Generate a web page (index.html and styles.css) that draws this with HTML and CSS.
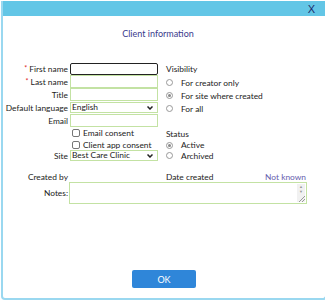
FILE: index.html
```html
<!DOCTYPE html>
<html lang="en">
<head>
    <meta charset="UTF-8">
    <title>Client information</title>
    <link rel="stylesheet" href="styles.css">
</head>
<body>
    <div class="dialog">
        <div class="titlebar">
            <span class="close">X</span>
        </div>

        <h1 class="heading">Client information</h1>

        <div class="form">
            <div class="left">
                <label class="label"><span class="req">*</span> First name</label>
                <input class="field focused" type="text">

                <label class="label"><span class="req">*</span> Last name</label>
                <input class="field" type="text">

                <label class="label">Title</label>
                <input class="field" type="text">

                <label class="label">Default language</label>
                <div class="select">English
                    <svg class="chev" width="6" height="4" viewBox="0 0 6 4"><path d="M0.5 0.5 L3 3 L5.5 0.5" fill="none" stroke="#222" stroke-width="1.5"/></svg>
                </div>

                <label class="label">Email</label>
                <input class="field" type="text">

                <span></span>
                <div class="check"><span class="box"></span>Email consent</div>

                <span></span>
                <div class="check"><span class="box"></span>Client app consent</div>

                <label class="label">Site</label>
                <div class="select small">Best Care Clinic
                    <svg class="chev" width="6" height="4" viewBox="0 0 6 4"><path d="M0.5 0.5 L3 3 L5.5 0.5" fill="none" stroke="#222" stroke-width="1.5"/></svg>
                </div>
            </div>

            <div class="right">
                <div class="group-title">Visibility</div>
                <div class="radio"><span class="dot"></span>For creator only</div>
                <div class="radio"><span class="dot on"></span>For site where created</div>
                <div class="radio"><span class="dot"></span>For all</div>

                <div class="group-title status">Status</div>
                <div class="radio tight"><span class="dot on"></span>Active</div>
                <div class="radio tight"><span class="dot"></span>Archived</div>
            </div>
        </div>

        <div class="created">
            <span class="label">Created by</span>
            <span class="date-label">Date created</span>
            <span class="unknown">Not known</span>
        </div>

        <div class="notes">
            <span class="label">Notes:</span>
            <div class="textarea">
                <span class="scroll">
                    <span class="arr">&#9650;</span>
                    <span class="arr">&#9660;</span>
                </span>
                <span class="grip"></span>
            </div>
        </div>

        <div class="actions">
            <button class="ok">OK</button>
        </div>
    </div>
</body>
</html>
```

FILE: styles.css
```css
* {
    margin: 0;
    padding: 0;
    box-sizing: border-box;
}

body {
    font-family: Lato, "Open Sans", sans-serif;
    font-size: 8.4px;
    color: #222;
    background: #fff;
    overflow: hidden;
}

.dialog {
    margin: 1px 0 0 1px;
    width: 326px;
    height: 299px;
    border: 2px solid #9ad8f0;
    border-top: none;
    border-radius: 0 0 4px 4px;
    background: #fff;
}

.titlebar {
    height: 15px;
    background: #63c6e6;
    display: flex;
    justify-content: flex-end;
    align-items: center;
    padding-right: 10px;
}

.close {
    font-family: "Liberation Sans", sans-serif;
    font-size: 11px;
    color: #1b2b6b;
}

.heading {
    font-size: 9px;
    font-weight: normal;
    color: #3a3a8c;
    text-align: center;
    line-height: 12px;
    margin: 12px 0 22px;
    padding-right: 12px;
}

.form {
    display: flex;
    gap: 8px;
}

.left {
    display: grid;
    grid-template-columns: 65px 88px;
    grid-template-rows: 13px 13px 13px 13px 13px 12px 11px 11px;
    column-gap: 2px;
    align-items: center;
}

.label {
    text-align: right;
    white-space: nowrap;
}

.req {
    color: #d22;
    font-size: 7px;
    vertical-align: top;
}

.field {
    height: 13px;
    width: 88px;
    border: 1px solid #c3e2a3;
    background: #fff;
    outline: none;
}

.field.focused {
    border: 1px solid #222;
    border-radius: 2px;
    height: 12px;
}

.select {
    height: 11px;
    border: 1px solid #c3e2a3;
    display: flex;
    align-items: center;
    justify-content: space-between;
    padding: 0 4px 0 1px;
    line-height: 9px;
}

.check {
    display: flex;
    align-items: center;
    white-space: nowrap;
}

.box {
    width: 8px;
    height: 8px;
    border: 1px solid #777;
    border-radius: 2px;
    margin: 0 3px 0 2px;
}

.right {
    display: flex;
    flex-direction: column;
}

.group-title {
    height: 14px;
    line-height: 14px;
}

.group-title.status {
    margin-top: 13px;
    height: 12px;
    line-height: 12px;
}

.radio {
    height: 13px;
    display: flex;
    align-items: center;
    white-space: nowrap;
}

.radio.tight {
    height: 10.5px;
}

.dot {
    width: 7px;
    height: 7px;
    border: 1px solid #999;
    border-radius: 50%;
    margin: 0 8px 0 0;
    position: relative;
    display: inline-block;
}

.dot.on::after {
    content: "";
    position: absolute;
    left: 1px;
    top: 1px;
    width: 3px;
    height: 3px;
    border-radius: 50%;
    background: #888;
}

.created {
    display: grid;
    grid-template-columns: 65px 98px 1fr auto;
    padding-right: 19px;
    margin-top: 11px;
    height: 10px;
    line-height: 10px;
    white-space: nowrap;
}

.date-label {
    grid-column: 3;
}

.unknown {
    grid-column: 4;
    color: #6660ae;
    text-align: right;
}

.notes {
    display: flex;
    align-items: center;
    gap: 1px;
}

.notes .label {
    width: 65px;
}

.textarea {
    width: 238px;
    height: 22px;
    border: 1px solid #c3e2a3;
    position: relative;
}

.scroll {
    position: absolute;
    right: 1px;
    top: 1px;
    bottom: 1px;
    width: 8px;
    background: #f1f1f1;
    display: flex;
    flex-direction: column;
    align-items: center;
    font-size: 4px;
    color: #999;
    line-height: 5px;
}

.grip {
    position: absolute;
    right: 1px;
    bottom: 1px;
    width: 6px;
    height: 6px;
    background: linear-gradient(135deg, transparent 45%, #999 45%, #999 55%, transparent 55%, transparent 70%, #999 70%, #999 80%, transparent 80%);
}

.actions {
    display: flex;
    justify-content: center;
    margin-top: 66px;
}

.ok {
    width: 64px;
    height: 18px;
    background: #2f86d9;
    color: #fff;
    border: none;
    border-radius: 2px;
    font-family: Lato, sans-serif;
    font-size: 9px;
}
```
